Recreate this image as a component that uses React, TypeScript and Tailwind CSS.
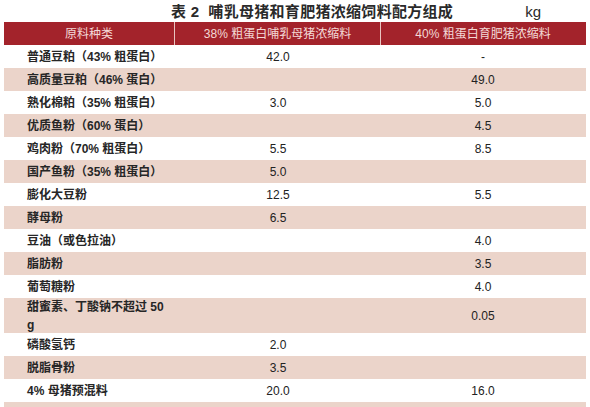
import React from "react";

type Row = { name: React.ReactNode; a: string; b: string; tall?: boolean };

const rows: Row[] = [
  { name: "普通豆粕（43% 粗蛋白）", a: "42.0", b: "-" },
  { name: "高质量豆粕（46% 蛋白）", a: "", b: "49.0" },
  { name: "熟化棉粕（35% 粗蛋白）", a: "3.0", b: "5.0" },
  { name: "优质鱼粉（60% 蛋白）", a: "", b: "4.5" },
  { name: "鸡肉粉（70% 粗蛋白）", a: "5.5", b: "8.5" },
  { name: "国产鱼粉（35% 粗蛋白）", a: "5.0", b: "" },
  { name: "膨化大豆粉", a: "12.5", b: "5.5" },
  { name: "酵母粉", a: "6.5", b: "" },
  { name: "豆油（或色拉油）", a: "", b: "4.0" },
  { name: "脂肪粉", a: "", b: "3.5" },
  { name: "葡萄糖粉", a: "", b: "4.0" },
  {
    name: (
      <>
        甜蜜素、丁酸钠不超过 50
        <br />g
      </>
    ),
    a: "",
    b: "0.05",
    tall: true,
  },
  { name: "磷酸氢钙", a: "2.0", b: "" },
  { name: "脱脂骨粉", a: "3.5", b: "" },
  { name: "4% 母猪预混料", a: "20.0", b: "16.0" },
  { name: "", a: "", b: "" },
];

export default function App() {
  return (
    <div
      className="w-[590px] h-[407px] overflow-hidden bg-white text-[#222]"
      style={{ fontFamily: '"Liberation Sans", "Noto Sans CJK SC", sans-serif' }}
    >
      {/* 标题 */}
      <div className="flex items-center h-[22px] pt-[2px]">
        <div className="pl-[171px] text-[15px] font-bold text-[#2a2a2a] tracking-[0.3px]">
          表 2&nbsp; 哺乳母猪和育肥猪浓缩饲料配方组成
        </div>
        <div className="ml-auto mr-[49px] text-[15px] text-[#2a2a2a]">kg</div>
      </div>

      <div className="px-[4px]">
        {/* 表头 */}
        <div className="grid grid-cols-[171px_206px_204px] h-[23px] bg-[#a3232b] text-[12px] text-[#f4d9d6]">
          <div className="flex items-center justify-center border-r border-[#e9c4c0]">原料种类</div>
          <div className="flex items-center justify-center border-r border-[#e9c4c0]">
            38% 粗蛋白哺乳母猪浓缩料
          </div>
          <div className="flex items-center justify-center">40% 粗蛋白育肥猪浓缩料</div>
        </div>

        {/* 数据行 */}
        {rows.map((r, i) => (
          <div
            key={i}
            className={`grid grid-cols-[171px_206px_204px] text-[12px] ${
              r.tall ? "h-[35px]" : "h-[23px]"
            } ${i % 2 === 1 ? "bg-[#ebd4ca]" : "bg-white"}`}
          >
            <div className="flex items-center pl-[23px] font-semibold leading-[18px] text-[#262626]">
              <span>{r.name}</span>
            </div>
            <div className="flex items-center justify-center">{r.a}</div>
            <div className="flex items-center justify-center">{r.b}</div>
          </div>
        ))}
      </div>
    </div>
  );
}
